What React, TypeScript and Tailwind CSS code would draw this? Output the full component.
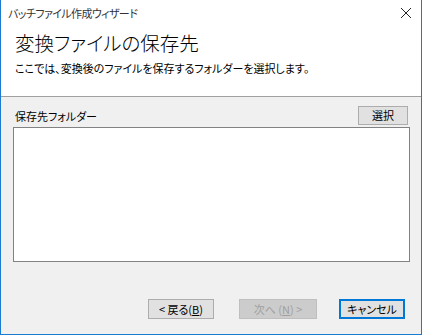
import React from 'react';

export default function App() {
  const font = {
    fontFamily: '"Noto Sans CJK JP", "Noto Sans", sans-serif',
    fontFeatureSettings: '"palt"',
  };
  return (
    <div
      className="w-[422px] h-[335px] flex flex-col bg-[#f0f0f0] border-l border-r border-b border-[#1b7ccf] overflow-hidden text-[#000]"
      style={font}
    >
      {/* Title bar */}
      <div className="h-[26px] bg-white flex items-center justify-between pl-[7px] pr-[9px] shrink-0">
        <span className="text-[11px] leading-none tracking-[-0.6px] text-[#333]">バッチファイル作成ウィザード</span>
        <svg width="12" height="12" viewBox="0 0 12 12" className="text-[#222]">
          <path d="M1 1L11 11M11 1L1 11" stroke="currentColor" strokeWidth="1" />
        </svg>
      </div>

      {/* Header */}
      <div className="h-[71px] bg-white border-b border-[#a0a0a0] pl-[14px] pt-[3px] shrink-0">
        <div className="text-[19.5px] leading-[28px] font-light">変換ファイルの保存先</div>
        <div className="text-[11px] leading-[16px] mt-[3px]">ここでは、変換後のファイルを保存するフォルダーを選択します。</div>
      </div>

      {/* Body */}
      <div className="flex-1 flex flex-col px-[12px] pt-[9px]">
        <div className="flex items-end justify-between h-[19px]">
          <span className="text-[11px] leading-none pl-[2px] pb-[3px]">保存先フォルダー</span>
          <button className="w-[50px] h-[19px] bg-[#e1e1e1] border border-[#adadad] text-[11px] leading-none flex items-center justify-center mr-[1px]">
            選択
          </button>
        </div>
        <div className="mt-[2px] h-[135px] bg-white border border-[#828282] mr-[-1px]" />

        <div className="flex justify-end mt-[37px] pr-[4px]">
          <button className="w-[66px] h-[20px] bg-[#e1e1e1] border border-[#adadad] text-[11px] leading-none flex items-center justify-center">
            &lt; 戻る(<span className="underline">B</span>)
          </button>
          <button
            disabled
            className="ml-[25px] w-[78px] h-[20px] bg-[#cccccc] border border-[#bfbfbf] text-[11px] leading-none text-[#a0a0a0] flex items-center justify-center"
          >
            次へ (<span className="underline">N</span>) &gt;
          </button>
          <button className="ml-[22px] w-[66px] h-[20px] bg-[#e1e1e1] border-2 border-[#0078d7] text-[11px] leading-none flex items-center justify-center">
            キャンセル
          </button>
        </div>
      </div>
    </div>
  );
}
